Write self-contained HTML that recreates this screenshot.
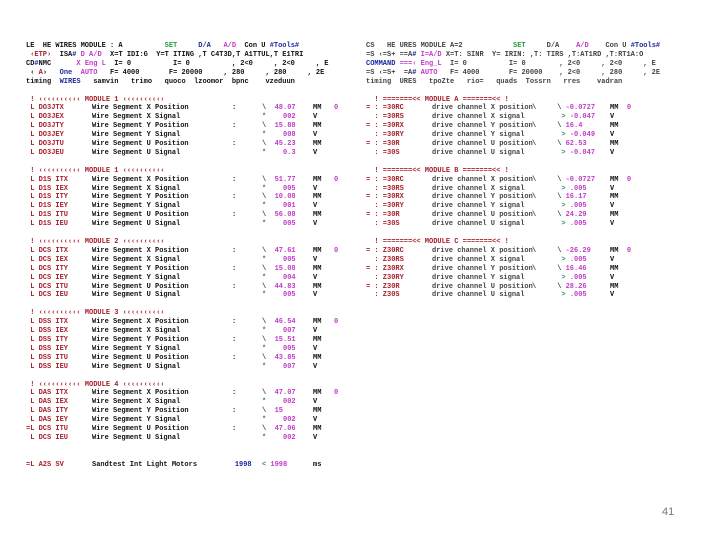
<!DOCTYPE html>
<html><head><meta charset="utf-8"><style>
html,body{margin:0;padding:0;background:#fff;width:720px;height:540px;overflow:hidden;position:relative}
pre{position:absolute;margin:0;font-family:"Liberation Mono",monospace;font-size:7px;line-height:8.9px;color:#222;white-space:pre;letter-spacing:0px;font-weight:bold}
.r{color:#a8202c}.m{color:#c03cc8}.g{color:#2a9a40}.b{color:#1a2aa0}.n{color:#111}.s{color:#3a8a70}.k{color:#444}
.p{position:absolute;left:662px;top:506px;font-family:"Liberation Sans",sans-serif;font-size:11px;color:#777}
</style></head><body>
<pre style="left:26px;top:42px" class="n">LE  HE WIRES MODULE : A          <span class="g">SET</span>     <span class="b">D/A</span>   <span class="m">A/D</span>  Con U <span class="b">#Tools#</span>
 <span class="r">‹ETP›</span>  ISA<span class="b">#</span> <span class="m">D A/D</span>  X=T IDI:G  Y=T ITING ,T C4T3D,T A1TTUL,T E1TRI
CD<span class="b">#</span>NMC      <span class="m">X Eng L</span>  I= 0          I= 0          , 2<0     , 2<0     , E
 ‹ <span class="r">A</span>›   <span class="b">One</span>  <span class="m">AUTO</span>   F= 4000       F= 20000     , 280     , 280     , 2E
timing  <span class="b">WIRES</span>   samvin   trimo   quoco  lzoomor  bpnc    vzeduun</pre>
<pre style="left:26px;top:95.5px" class="r"> ! ‹‹‹‹‹‹‹‹‹‹ MODULE 1 ‹‹‹‹‹‹‹‹‹‹
 L DO3JTX
 L DO3JEX
 L DO3JTY
 L DO3JEY
 L DO3JTU
 L DO3JEU

 ! ‹‹‹‹‹‹‹‹‹‹ MODULE 1 ‹‹‹‹‹‹‹‹‹‹
 L D1S ITX
 L D1S IEX
 L D1S ITY
 L D1S IEY
 L D1S ITU
 L D1S IEU

 ! ‹‹‹‹‹‹‹‹‹‹ MODULE 2 ‹‹‹‹‹‹‹‹‹‹
 L DCS ITX
 L DCS IEX
 L DCS ITY
 L DCS IEY
 L DCS ITU
 L DCS IEU

 ! ‹‹‹‹‹‹‹‹‹‹ MODULE 3 ‹‹‹‹‹‹‹‹‹‹
 L DSS ITX
 L DSS IEX
 L DSS ITY
 L DSS IEY
 L DSS ITU
 L DSS IEU

 ! ‹‹‹‹‹‹‹‹‹‹ MODULE 4 ‹‹‹‹‹‹‹‹‹‹
 L DAS ITX
 L DAS IEX
 L DAS ITY
 L DAS IEY
=L DCS ITU
 L DCS IEU


=L A2S SV</pre>
<pre style="left:92px;top:95.5px" class="n">

Wire Segment X Position
Wire Segment X Signal
Wire Segment Y Position
Wire Segment Y Signal
Wire Segment U Position
Wire Segment U Signal


Wire Segment X Position
Wire Segment X Signal
Wire Segment Y Position
Wire Segment Y Signal
Wire Segment U Position
Wire Segment U Signal


Wire Segment X Position
Wire Segment X Signal
Wire Segment Y Position
Wire Segment Y Signal
Wire Segment U Position
Wire Segment U Signal


Wire Segment X Position
Wire Segment X Signal
Wire Segment Y Position
Wire Segment Y Signal
Wire Segment U Position
Wire Segment U Signal


Wire Segment X Position
Wire Segment X Signal
Wire Segment Y Position
Wire Segment Y Signal
Wire Segment U Position
Wire Segment U Signal


Sandtest Int Light Motors         <span class="b">1998</span></pre>
<pre style="left:232px;top:95.5px" class="n">

:

:

:



:

:

:



:

:

:



:

:

:



:

:

:</pre>
<pre style="left:262px;top:95.5px" class="m">

<span class="k">\</span>  48.07
<span class="s">*</span>    002
<span class="k">\</span>  15.88
<span class="s">*</span>    008
<span class="k">\</span>  45.23
<span class="s">*</span>    0.3


<span class="k">\</span>  51.77
<span class="s">*</span>    005
<span class="k">\</span>  10.08
<span class="s">*</span>    001
<span class="k">\</span>  56.08
<span class="s">*</span>    005


<span class="k">\</span>  47.61
<span class="s">*</span>    005
<span class="k">\</span>  15.08
<span class="s">*</span>    004
<span class="k">\</span>  44.83
<span class="s">*</span>    005


<span class="k">\</span>  46.54
<span class="s">*</span>    007
<span class="k">\</span>  15.51
<span class="s">*</span>    005
<span class="k">\</span>  43.85
<span class="s">*</span>    007


<span class="k">\</span>  47.07
<span class="s">*</span>    002
<span class="k">\</span>  15
<span class="s">*</span>    002
<span class="k">\</span>  47.06
<span class="s">*</span>    002


<span class="s">&lt;</span> 1998</pre>
<pre style="left:313px;top:95.5px" class="n">

MM   <span class="m">0</span>
V
MM
V
MM
V


MM   <span class="m">0</span>
V
MM
V
MM
V


MM   <span class="m">0</span>
V
MM
V
MM
V


MM   <span class="m">0</span>
V
MM
V
MM
V


MM   <span class="m">0</span>
V
MM
V
MM
V


ms</pre>
<pre style="left:366px;top:42px" class="k">CS   HE URES MODULE A=2            <span class="g">SET</span>     D/A    <span class="m">A/D</span>    Con U <span class="b">#Tools#</span>
=S ‹=S+ ==A<span class="b">#</span> <span class="m">I=A/D</span> X=T: SINR  Y= IRIN: ,T: TIRS ,T:AT1RD ,T:RT1A:O
<span class="b">COMMAND</span> <span class="m">===‹ Eng_L</span>  I= 0          I= 0        , 2<0     , 2<0     , E
=S ‹=S+  =A<span class="b">#</span> <span class="m">AUTO</span>   F= 4000       F= 20000    , 2<0     , 280     , 2E
timing  URES   tpoZte   rio=   quads  Tossrn   rres    vadran</pre>
<pre style="left:366px;top:95.5px" class="r">  ! =======&lt;&lt; MODULE A =======&lt;&lt; !
= : =30RC
  : =30RS
= : =30RX
  : =30RY
= : =30R
  : =30S

  ! =======&lt;&lt; MODULE B =======&lt;&lt; !
= : =30RC
  : =30RS
= : =30RX
  : =30RY
= : =30R
  : =30S

  ! =======&lt;&lt; MODULE C =======&lt;&lt; !
= : Z30RC
  : Z30RS
= : Z30RX
  : Z30RY
= : Z30R
  : Z30S</pre>
<pre style="left:432px;top:95.5px" class="k">

drive channel X position
drive channel X signal
drive channel Y position
drive channel Y signal
drive channel U position
drive channel U signal


drive channel X position
drive channel X signal
drive channel Y position
drive channel Y signal
drive channel U position
drive channel U signal


drive channel X position
drive channel X signal
drive channel Y position
drive channel Y signal
drive channel U position
drive channel U signal</pre>
<pre style="left:532px;top:95.5px" class="k">

\     \ <span class="m">-0.0727</span>
       <span class="s">&gt;</span> <span class="m">-0.047</span>
\     \ <span class="m">16.4</span>
       <span class="s">&gt;</span> <span class="m">-0.049</span>
\     \ <span class="m">62.53</span>
       <span class="s">&gt;</span> <span class="m">-0.047</span>


\     \ <span class="m">-0.0727</span>
       <span class="s">&gt;</span> <span class="m">.005</span>
\     \ <span class="m">16.17</span>
       <span class="s">&gt;</span> <span class="m">.005</span>
\     \ <span class="m">24.29</span>
       <span class="s">&gt;</span> <span class="m">.005</span>


\     \ <span class="m">-26.29</span>
       <span class="s">&gt;</span> <span class="m">.005</span>
\     \ <span class="m">16.46</span>
       <span class="s">&gt;</span> <span class="m">.005</span>
\     \ <span class="m">28.26</span>
       <span class="s">&gt;</span> <span class="m">.005</span></pre>
<pre style="left:610px;top:95.5px" class="n">

MM  <span class="m">0</span>
V
MM
V
MM
V


MM  <span class="m">0</span>
V
MM
V
MM
V


MM  <span class="m">0</span>
V
MM
V
MM
V</pre>
<div class="p">41</div>
</body></html>
